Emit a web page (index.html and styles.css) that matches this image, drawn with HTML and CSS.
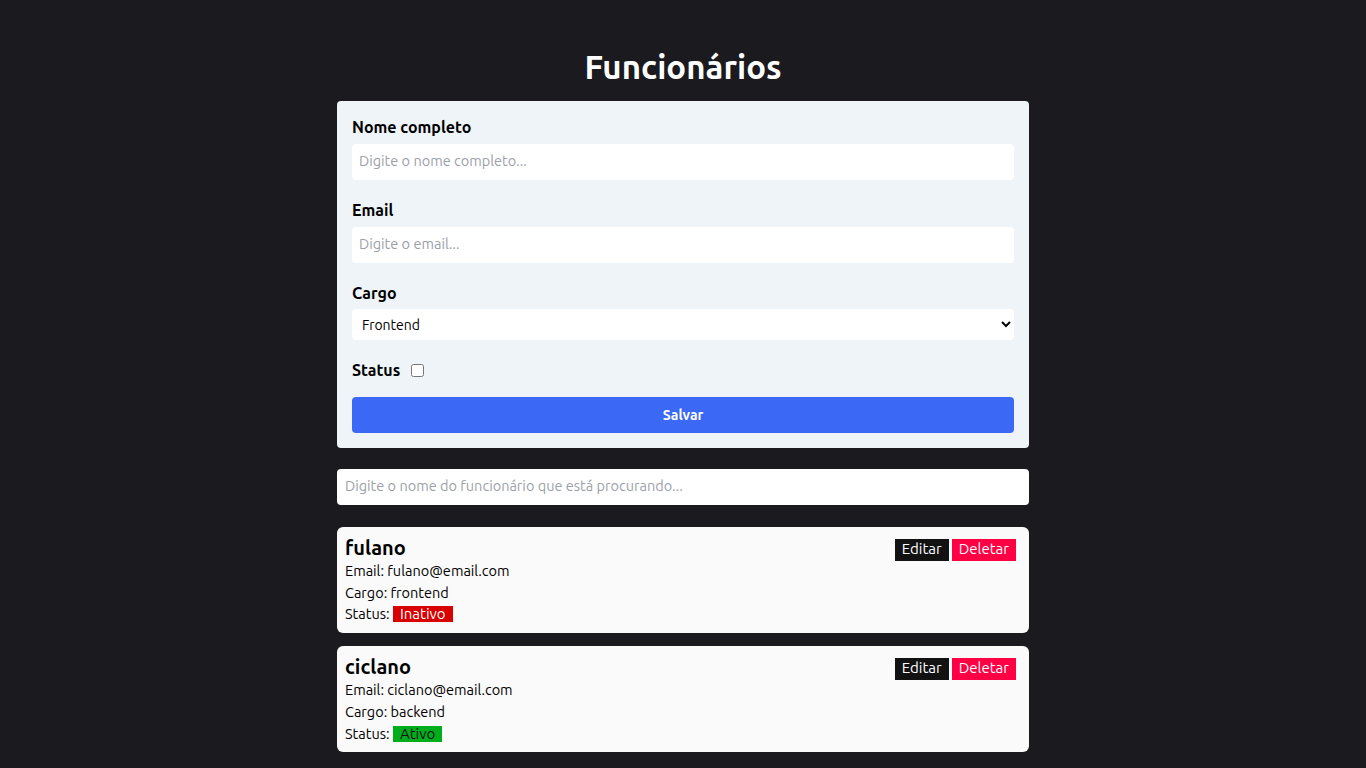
FILE: index.html
```html
<!DOCTYPE html>
<html lang="pt-BR">
<head>
<meta charset="utf-8">
<title>Funcionários</title>
<link rel="stylesheet" href="styles.css">
</head>
<body>
<main class="app">
  <h1 class="title">Funcionários</h1>
  <form class="form-card">
    <label class="label" for="nome">Nome completo</label>
    <input class="input" id="nome" type="text" placeholder="Digite o nome completo...">
    <label class="label" for="email">Email</label>
    <input class="input" id="email" type="text" placeholder="Digite o email...">
    <label class="label" for="cargo">Cargo</label>
    <select class="select" id="cargo">
      <option>Frontend</option>
      <option>Backend</option>
    </select>
    <div class="status-row">
      <label class="label inline" for="status">Status</label>
      <input class="checkbox" id="status" type="checkbox">
    </div>
    <button class="save" type="button">Salvar</button>
  </form>
  <input class="search" type="text" placeholder="Digite o nome do funcionário que está procurando...">
  <section class="list">
    <article class="emp">
      <div class="emp-info">
        <h3 class="emp-name">fulano</h3>
        <p class="emp-line">Email: fulano@email.com</p>
        <p class="emp-line">Cargo: frontend</p>
        <p class="emp-line">Status: <span class="badge off">Inativo</span></p>
      </div>
      <div class="emp-actions">
        <button class="btn edit" type="button">Editar</button>
        <button class="btn del" type="button">Deletar</button>
      </div>
    </article>
    <article class="emp">
      <div class="emp-info">
        <h3 class="emp-name">ciclano</h3>
        <p class="emp-line">Email: ciclano@email.com</p>
        <p class="emp-line">Cargo: backend</p>
        <p class="emp-line">Status: <span class="badge on">Ativo</span></p>
      </div>
      <div class="emp-actions">
        <button class="btn edit" type="button">Editar</button>
        <button class="btn del" type="button">Deletar</button>
      </div>
    </article>
  </section>
</main>
</body>
</html>
```

FILE: styles.css
```css
* { box-sizing: border-box; }
html, body {
  margin: 0;
  background: #1b1a1f;
  font-family: "Ubuntu", "Lato", "Noto Sans", sans-serif;
  color: #000;
}
.app {
  width: 692px;
  margin: 0 auto;
  padding-top: 48px;
  display: flex;
  flex-direction: column;
}
.title {
  margin: 0 0 15px;
  text-align: center;
  color: #fff;
  font-size: 33px;
  line-height: 38px;
  font-weight: 700;
}
.form-card {
  background: #eff4f8;
  border-radius: 4px;
  padding: 15px;
  display: flex;
  flex-direction: column;
}
.label {
  font-size: 16px;
  font-weight: 700;
  line-height: 22px;
  margin-bottom: 6px;
}
.label.inline { margin: 0 11px 0 0; }
.input, .search {
  height: 36px;
  border: none;
  border-radius: 4px;
  background: #fff;
  padding: 0 7px 3px;
  font: inherit;
  font-size: 14.5px;
  margin-bottom: 19px;
  outline: none;
}
.input::placeholder, .search::placeholder { color: #9ba1a9; }
.select {
  height: 31px;
  border: none;
  border-radius: 4px;
  background: #fff;
  font: inherit;
  font-size: 14px;
  padding: 0 6px;
  margin: -1px 0 19px;
  color: #000;
}
.status-row {
  display: flex;
  align-items: center;
  height: 22px;
  margin-bottom: 16px;
}
.checkbox { margin: 0; width: 13px; height: 13px; }
.save {
  height: 36px;
  border: none;
  border-radius: 4px;
  background: #3b68f5;
  color: #fff;
  font: inherit;
  font-size: 14px;
  font-weight: 700;
}
.search {
  margin: 21px 0 22px;
  padding: 0 8px 3px;
}
.list { display: flex; flex-direction: column; gap: 13px; }
.emp {
  background: #fafafa;
  border-radius: 6px;
  padding: 8px 13px 8px 8px;
  display: flex;
  justify-content: space-between;
  align-items: flex-start;
}
.emp-name {
  margin: 0;
  font-size: 20px;
  line-height: 25px;
  font-weight: 700;
}
.emp-line {
  margin: 0;
  font-size: 14.5px;
  line-height: 21.7px;
}
.badge {
  display: inline-block;
  line-height: 16px;
  padding: 0 7px;
  font-size: 15px;
}
.badge.off { background: #d90000; color: #fff; }
.badge.on { background: #00ad1c; color: #111; padding: 0 7px; }
.emp-actions { display: flex; gap: 3px; margin-top: 4px; }
.btn {
  border: none;
  font: inherit;
  font-size: 15px;
  height: 22px;
  line-height: 20px;
  padding: 0 7px 2px;
  color: #fff;
}
.btn.edit { background: #121212; }
.btn.del { background: #ff0044; }
```
